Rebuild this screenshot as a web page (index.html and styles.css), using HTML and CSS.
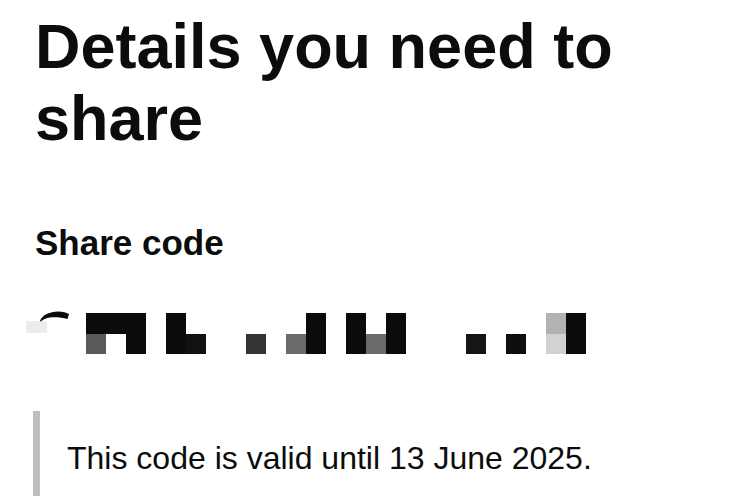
FILE: index.html
```html
<!DOCTYPE html>
<html lang="en">
<head>
<meta charset="utf-8">
<title>Details you need to share</title>
<link rel="stylesheet" href="styles.css">
</head>
<body>
<main class="page">
  <h1 class="title">Details you need to share</h1>
  <h2 class="subtitle">Share code</h2>
  <div class="code" aria-label="Share code (obscured)">
    <svg class="mosaic" width="600" height="50" viewBox="0 0 600 50" xmlns="http://www.w3.org/2000/svg">
      <rect x="26" y="13" width="21" height="12" fill="#ececec"/>
      <path d="M40 13 C42 7 50 3.5 58 3.5 C63 3.5 66 4.5 69 6 L67.5 11 C62 9.5 56 9 50 9.5 C46 10 43 11.5 41 13.5 Z" fill="#0b0b0b"/>
      <!-- top row -->
      <rect x="86" y="5" width="60" height="21" fill="#0b0b0b"/>
      <rect x="166" y="5" width="20" height="21" fill="#0b0b0b"/>
      <rect x="306" y="5" width="20" height="21" fill="#0b0b0b"/>
      <rect x="346" y="5" width="20" height="21" fill="#0b0b0b"/>
      <rect x="386" y="5" width="20" height="21" fill="#0b0b0b"/>
      <rect x="546" y="5" width="20" height="21" fill="#b2b2b2"/>
      <rect x="566" y="5" width="20" height="21" fill="#0b0b0b"/>
      <!-- bottom row -->
      <rect x="86" y="26" width="20" height="20" fill="#595959"/>
      <rect x="126" y="26" width="20" height="20" fill="#0b0b0b"/>
      <rect x="166" y="26" width="20" height="20" fill="#0b0b0b"/>
      <rect x="186" y="26" width="20" height="20" fill="#111111"/>
      <rect x="246" y="26" width="20" height="20" fill="#333333"/>
      <rect x="286" y="26" width="20" height="20" fill="#6b6b6b"/>
      <rect x="306" y="26" width="20" height="20" fill="#0b0b0b"/>
      <rect x="346" y="26" width="20" height="20" fill="#0b0b0b"/>
      <rect x="366" y="26" width="20" height="20" fill="#6b6b6b"/>
      <rect x="386" y="26" width="20" height="20" fill="#0b0b0b"/>
      <rect x="466" y="26" width="20" height="20" fill="#151515"/>
      <rect x="506" y="26" width="20" height="20" fill="#0e0e0e"/>
      <rect x="546" y="26" width="20" height="20" fill="#d2d2d2"/>
      <rect x="566" y="26" width="20" height="20" fill="#0b0b0b"/>
    </svg>
  </div>
  <div class="inset">
    <p class="inset-text">This code is valid until 13 June 2025.</p>
  </div>
</main>
</body>
</html>
```
FILE: styles.css
```css
html, body {
  margin: 0;
  padding: 0;
  background: #ffffff;
}

body {
  font-family: "Liberation Sans", Arial, sans-serif;
  color: #0b0c0c;
  overflow: hidden;
}

.page {
  display: flex;
  flex-direction: column;
  align-items: flex-start;
}

.title {
  margin: 10px 0 0 35px;
  font-size: 63px;
  line-height: 72px;
  font-weight: 700;
  width: 640px;
}

.subtitle {
  margin: 69px 0 0 35px;
  font-size: 35px;
  line-height: 40px;
  font-weight: 700;
}

.code {
  margin-top: 45px;
  height: 50px;
}

.mosaic {
  display: block;
}

.inset {
  margin: 53px 0 0 33px;
  border-left: 7px solid #bfbfbf;
  padding: 27px 0 27px 27px;
}

.inset-text {
  margin: 0;
  font-size: 32px;
  line-height: 40px;
  font-weight: 400;
  white-space: nowrap;
}
```
